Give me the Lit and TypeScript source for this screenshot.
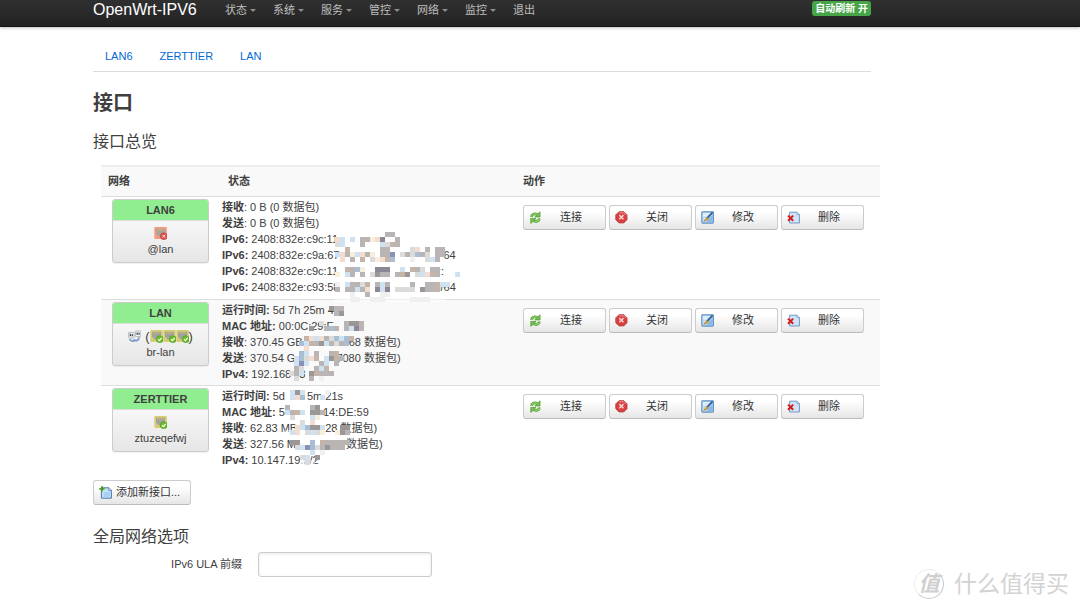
import { LitElement, html, css, svg, nothing } from "lit";
import { customElement, property } from "lit/decorators.js";

type Part = string | number;
interface Line { label: string; parts: Part[]; }
interface Net {
  name: string;
  device: string;
  kind: "off" | "bridge" | "on";
  lines: Line[];
  mosaic: { x: number; y: number; rows: string[] };
}

/* Block colours of the redacted areas */
const TONES: Record<string, string> = {
  g: "#b9b5b5", G: "#9b9797", d: "#8b8794", l: "#dcdbdb", f: "#f0f0f0", w: "#ffffff",
  t: "#c5b5a8", p: "#f3ddd0", b: "#cfe2f1", B: "#a9bdd5", v: "#8992b6", y: "#f7efdc",
};

const NETS: Net[] = [
  {
    name: "LAN6", device: "@lan", kind: "off",
    lines: [
      { label: "接收", parts: [": 0 B (0 数据包)"] },
      { label: "发送", parts: [": 0 B (0 数据包)"] },
      { label: "IPv6:", parts: [" 2408:832e:c9c:11"] },
      { label: "IPv6:", parts: [" 2408:832e:c9a:67", 104, "64"] },
      { label: "IPv6:", parts: [" 2408:832e:c9c:11", 100, "::"] },
      { label: "IPv6:", parts: [" 2408:832e:c93:58", 95, "9/64"] },
    ],
    mosaic: {
      x: 113, y: 33, rows: [
        "..........gg.............",
        "pb.b.ggypd..g............",
        "lb...g...bltg............",
        "..t......gg....lp.g.gg...",
        "bpgybpgywggv.lglBgl.gg...",
        ".p.g.t.lyptB...f..lbg....",
        "wwwww..ww....www...ww....",
        "..tgBy..ddd..b.tgl.gg....",
        "y.bg.g.lGgg.gtG.lbptg...b",
        "wwwww..ww....www...ww....",
        "f.bgglt.gbg....g..ggtbb..",
        "g.ggbgp.dbd.llll.Gggt....",
        "...f..g..ff..............",
        "wwwffwwfffwwwwwffffwww...",
      ],
    },
  },
  {
    name: "LAN", device: "br-lan", kind: "bridge",
    lines: [
      { label: "运行时间:", parts: [" 5d 7h 25m 4"] },
      { label: "MAC 地址:", parts: [" 00:0C:29:E", 12, "?:7"] },
      { label: "接收", parts: [": 370.45 GB", 46, "68 数据包)"] },
      { label: "发送", parts: [": 370.54 G", 41, "7080 数据包)"] },
      { label: "IPv4:", parts: [" 192.168", 8, "3"] },
    ],
    mosaic: {
      x: 67, y: 4, rows: [
        "........Ggg....",
        ".........gG....",
        "...............",
        "......l....gGGg",
        "....G..gBg.gbdg",
        "...............",
        "...tpbpglBbBt..",
        "..BbtgGbglgB...",
        ".w.p.w.w.......",
        ".wBb.g..gt.....",
        ".bBlptwbGtg....",
        ".bvb..gb.g.....",
        ".gl..gbt.......",
        "lgb.Gtggg......",
        ".l..gwf........",
      ],
    },
  },
  {
    name: "ZERTTIER", device: "ztuzeqefwj", kind: "on",
    lines: [
      { label: "运行时间:", parts: [" 5d", 22, "5m 21s"] },
      { label: "MAC 地址:", parts: [" 5", 38, "14:DE:59"] },
      { label: "接收", parts: [": 62.83 MB", 28, "28 数据包)"] },
      { label: "发送", parts: [": 327.56 M", 50, "数据包)"] },
      { label: "IPv4:", parts: [" 10.147.19.5/2"] },
    ],
    mosaic: {
      x: 63, y: 2, rows: [
        ".bGb....f......",
        ".bpB...b.......",
        "...............",
        "g.w..gG........",
        "bgtbwGGg.......",
        ".lw..byw.......",
        "..wl.pw........",
        "..pbBGGb...GG..",
        "wbpwlbly..yGg..",
        "wwwww..www.....",
        ".GG..B.tggggg..",
        "..lbvBlgGggg...",
        "..w..b.f.......",
        "...lb.G........",
        "...wlw.........",
      ],
    },
  },
];

const ACTIONS = [
  { icon: "reload", text: "连接" },
  { icon: "stop", text: "关闭" },
  { icon: "edit", text: "修改" },
  { icon: "remove", text: "删除" },
];

const ICONS: Record<string, unknown> = {
  reload: svg`
    <path d="M2.6 6C2.6 3.2 5.6 2.2 8.2 3.6" fill="none" stroke="#4b9a2c" stroke-width="2.8"/>
    <path d="M2.6 6C2.6 3.2 5.6 2.2 8.2 3.6" fill="none" stroke="#9ad873" stroke-width="1.2"/>
    <path d="M11 .8v5.1H5.9z" fill="#7cc457" stroke="#4b9a2c" stroke-width=".8"/>
    <path d="M10.2 7.4c0 2.8-3 3.8-5.6 2.4" fill="none" stroke="#4b9a2c" stroke-width="2.8"/>
    <path d="M10.2 7.4c0 2.8-3 3.8-5.6 2.4" fill="none" stroke="#9ad873" stroke-width="1.2"/>
    <path d="M1.8 12.4V7.4h5.1z" fill="#7cc457" stroke="#4b9a2c" stroke-width=".8"/>`,
  stop: svg`
    <path d="M4 .7h4.8l3.2 3.2v4.8l-3.2 3.2H4L.8 8.7V3.9z" fill="#d9403f" stroke="#b94142" stroke-width=".9"/>
    <path d="M4.3 1.8h4.2l2.2 2.2" fill="none" stroke="#f29a98" stroke-width=".9"/>
    <path d="M4.3 4.1l4.2 4.2M8.5 4.1L4.3 8.3" stroke="#f7d2d2" stroke-width="1.5"/>`,
  edit: svg`
    <rect x=".8" y=".9" width="11.6" height="11.2" rx=".8" fill="#c2dcf5" stroke="#5c8fc2" stroke-width="1.1"/>
    <path d="M2 2.6h6.4M2 4.6h4.4" stroke="#edf6ff" stroke-width="1.3"/>
    <path d="M11.8 11.6V3.6L4.6 11.6z" fill="#8bb8e4"/>
    <path d="M11.6 1.4L5.8 7.6" stroke="#315f94" stroke-width="1.7"/>
    <path d="M6 6.4L2.8 10.4l4.6-2.4z" fill="#f0b429" stroke="#b77c17" stroke-width=".7"/>`,
  remove: svg`
    <path d="M2.6 1.2h7.6l2.2 2.2v8.6H2.6z" fill="#cfe4f8" stroke="#7398c1" stroke-width="1"/>
    <path d="M10 1.2v2.4h2.4" fill="#fff" stroke="#7398c1" stroke-width=".8"/>
    <path d="M1 4.6l5.2 5.2M6.2 4.6L1 9.8" stroke="#d51c1c" stroke-width="2"/>`,
  add: svg`
    <path d="M2.4 1.8h7.6l2.4 2.4v8H2.4z" fill="#c8e2fa" stroke="#4a78ab" stroke-width="1"/>
    <path d="M4.6 6h6.6v5.2H4.6z" fill="#a9d0f5"/>
    <path d="M9.8 1.8v2.6h2.6" fill="#fff" stroke="#4a78ab" stroke-width=".8"/>
    <path d="M2.9.3v5.2M.3 2.9h5.2" stroke="#4e9a2b" stroke-width="1.9"/>`,
  off: svg`
    <rect x=".3" y="0" width="12.5" height="12" rx="1" fill="#f49a80"/>
    <path d="M2 1.8h9v4.8L8.2 9.6H4.8L2 6.6z" fill="#aaa49b"/>
    <path d="M3.6 1.8v1.8M5.3 1.8v1.8M7 1.8v1.8M8.7 1.8v1.8" stroke="#d9b96b" stroke-width=".8"/>
    <circle cx="9.8" cy="9.2" r="3.4" fill="#df5656" stroke="#bd3b3d" stroke-width=".7"/>
    <path d="M8.5 7.9l2.6 2.6M11.1 7.9l-2.6 2.6" stroke="#f9dcdc" stroke-width="1"/>`,
  on: svg`
    <rect x=".3" y="0" width="12.5" height="12" rx="1" fill="#d6cc74"/>
    <path d="M2 1.8h9v4.8L8.2 9.6H4.8L2 6.6z" fill="#a3a39b"/>
    <path d="M3.6 1.8v1.8M5.3 1.8v1.8M7 1.8v1.8M8.7 1.8v1.8" stroke="#d3c46a" stroke-width=".8"/>
    <circle cx="9.8" cy="9.2" r="3.4" fill="#6fc02c" stroke="#4c9a1c" stroke-width=".7"/>
    <path d="M8 9.3l1.4 1.4 2.3-2.8" fill="none" stroke="#fff" stroke-width="1.1"/>`,
  bridge: svg`
    <rect x=".6" y="2.4" width="5.4" height="5.6" rx=".6" fill="#f4f6f8" stroke="#a3a9b0" stroke-width=".8"/>
    <rect x="7.4" y="1" width="5.4" height="5.6" rx=".6" fill="#f4f6f8" stroke="#a3a9b0" stroke-width=".8"/>
    <path d="M2.4 3.8v2.4M4.3 4.2v2M9.2 2.4v2.4M11.1 2.8v2" stroke="#3f454c" stroke-width="1.3"/>
    <path d="M1.6 9c1.2 3 4.6 2.8 5.2.2M6.2 9.6c1.8 2 4.8.8 4.8-2.4" fill="none" stroke="#7d9bc9" stroke-width="1.8"/>`,
};

@customElement("ui-icon")
class UiIcon extends LitElement {
  @property() name = "";
  static styles = css`
    :host { display: inline-block; width: 13px; height: 13px; flex: none; }
    svg { display: block; width: 100%; height: 100%; }
  `;
  render() {
    return html`<svg viewBox="0 0 13 13" aria-hidden="true">${ICONS[this.name]}</svg>`;
  }
}

@customElement("app-root")
class AppRoot extends LitElement {
  static styles = css`
    * { box-sizing: border-box; }
    :host {
      display: block;
      position: relative;
      min-height: 100vh;
      background: #fff;
      color: #404040;
      font: 11px/16px "Liberation Sans", "Noto Sans CJK SC", sans-serif;
    }
    a { text-decoration: none; }
    .wrap { margin: 0 209px 0 93px; }
    header {
      height: 27px;
      background: linear-gradient(#303030, #222);
      border-bottom: 1px solid #111;
      box-shadow: 0 1px 3px rgba(0, 0, 0, 0.25);
    }
    .bar { display: flex; align-items: flex-start; }
    .brand { width: 132px; font-size: 16px; line-height: 19px; color: #fff; white-space: nowrap; }
    nav { display: flex; gap: 17px; flex: 1; }
    .menu { display: flex; align-items: center; gap: 3px; line-height: 20px; color: #bfbfbf; }
    .caret { border: 3px solid transparent; border-top-color: #8c8c8c; border-bottom: 0; }
    .badge {
      margin: 1px 0 0; padding: 0 3px; border: 0; border-radius: 3px; background: #46a546; color: #fff;
      font: bold 10px/15px "Liberation Sans", "Noto Sans CJK SC", sans-serif;
    }
    .tabs { display: flex; gap: 27px; margin-top: 20px; padding: 1px 12px 7px; line-height: 16px; border-bottom: 1px solid #ddd; }
    .tabs a { color: #0069d6; }
    h2 { margin: 16px 0 0; font-size: 20px; line-height: 30px; }
    h3 { margin: 0; font-size: 16px; line-height: 30px; font-weight: normal; }
    .overview { margin-top: 9px; }
    table { margin: 8px -9px 0 8px; border-collapse: collapse; table-layout: fixed; width: calc(100% + 1px); border-top: 2px solid #eee; }
    .c-net { width: 115px; }
    .c-act { width: 357px; }
    th { height: 30px; padding: 0 7px; text-align: left; background: #f9f9f9; }
    th.state { padding-left: 12px; }
    th.act { padding-left: 0; }
    td { vertical-align: top; padding: 2px 0 3px; border-top: 1px solid #ddd; }
    tr:first-child td { padding-bottom: 4px; }
    tr.alt td { background: #f9f9f9; }
    td.net { padding-left: 11px; padding-right: 7px; }
    td.state { padding-left: 6px; }
    .card { border: 1px solid #ccc; border-radius: 3px; overflow: hidden; text-align: center; background: linear-gradient(#fff, #e6e6e6); box-shadow: 0 1px 1px rgba(0, 0, 0, 0.06); }
    .card-name { background: #90ee90; font-weight: bold; line-height: 20px; }
    .card-body { padding: 6px 0 5px; border-top: 1px solid #ddd; }
    .icons { display: flex; justify-content: center; height: 14px; align-items: center; font-size: 13px; }
    .icons .first { margin-right: 4px; }
    .status { position: relative; }
    .line { height: 16px; white-space: pre; }
    .gap { display: inline-block; }
    .mosaic { position: absolute; }
    .acts { display: flex; gap: 3px; padding-top: 6px; }
    button.btn {
      display: flex; align-items: center; height: 25px; margin: 0; padding: 0 5px; color: #333; cursor: pointer;
      font: 11px/16px "Liberation Sans", "Noto Sans CJK SC", sans-serif;
      border: 1px solid #ccc; border-bottom-color: #bbb; border-radius: 3px; background: linear-gradient(#fff, #fff 25%, #e6e6e6);
    }
    .acts button.btn { width: 83px; }
    .acts .label { flex: 1; text-align: center; }
    button.add { gap: 4px; margin-top: 9px; padding-right: 10px; }
    .global { margin-top: 17px; }
    .field { display: flex; align-items: center; gap: 16px; }
    .field label { width: 149px; text-align: right; }
    .field input { width: 174px; height: 25px; border: 1px solid #ccc; border-radius: 3px; background: #fff; box-shadow: inset 0 1px 3px rgba(0, 0, 0, 0.1); font: inherit; padding: 0 4px; }
    .mark { position: absolute; right: 11px; bottom: 9px; display: flex; align-items: center; gap: 10px; color: #d3d3d3; font-size: 23px; line-height: 34px; }
    .seal { width: 30px; height: 30px; border: 1px solid #eee; border-right-color: #c8c8c8; border-bottom-color: #c8c8c8; border-radius: 50%; text-align: center; font-size: 21px; line-height: 27px; font-weight: bold; font-style: italic; color: #cfcfcf; }
  `;

  private mosaic(m: Net["mosaic"]) {
    const cols = m.rows[0].length;
    return html`<svg class="mosaic" style="left:${m.x}px;top:${m.y}px" width=${cols * 5} height=${m.rows.length * 5}
      shape-rendering="crispEdges" aria-hidden="true">
      ${m.rows.flatMap((row, r) => [...row].map((c, i) =>
        c in TONES ? svg`<rect x=${i * 5} y=${r * 5} width="5" height="5" fill=${TONES[c]} opacity=${c === "w" ? 0.5 : 1}></rect>` : nothing))}
    </svg>`;
  }

  private badges(kind: Net["kind"]) {
    if (kind !== "bridge") return html`<ui-icon name=${kind}></ui-icon>`;
    return html`<ui-icon class="first" name="bridge"></ui-icon>(<ui-icon name="on"></ui-icon><ui-icon name="on"></ui-icon><ui-icon name="on"></ui-icon>)`;
  }

  private row(n: Net, i: number) {
    return html`<tr class=${i % 2 ? "alt" : ""}>
      <td class="net"><div class="card">
        <div class="card-name">${n.name}</div>
        <div class="card-body"><div class="icons">${this.badges(n.kind)}</div><div>${n.device}</div></div>
      </div></td>
      <td class="state"><div class="status">
        ${n.lines.map((l) => html`<div class="line"><b>${l.label}</b>${l.parts.map((p) =>
          typeof p === "number" ? html`<span class="gap" style="width:${p}px"></span>` : p)}</div>`)}
        ${this.mosaic(n.mosaic)}
      </div></td>
      <td><div class="acts">${ACTIONS.map((a) => html`<button class="btn" type="button"><ui-icon name=${a.icon}></ui-icon><span class="label">${a.text}</span></button>`)}</div></td>
    </tr>`;
  }

  render() {
    return html`
      <header><div class="wrap bar">
        <a class="brand" href="#">OpenWrt-IPV6</a>
        <nav>
          ${["状态", "系统", "服务", "管控", "网络", "监控"].map((t) => html`<a class="menu" href="#">${t}<span class="caret"></span></a>`)}
          <a class="menu" href="#">退出</a>
        </nav>
        <button class="badge" type="button">自动刷新 开</button>
      </div></header>
      <main class="wrap">
        <div class="tabs"><a href="#">LAN6</a><a href="#">ZERTTIER</a><a href="#">LAN</a></div>
        <h2>接口</h2>
        <h3 class="overview">接口总览</h3>
        <table>
          <colgroup><col class="c-net"><col><col class="c-act"></colgroup>
          <thead><tr><th>网络</th><th class="state">状态</th><th class="act">动作</th></tr></thead>
          <tbody>${NETS.map((n, i) => this.row(n, i))}</tbody>
        </table>
        <button class="btn add" type="button"><ui-icon name="add"></ui-icon>添加新接口...</button>
        <h3 class="global">全局网络选项</h3>
        <div class="field"><label for="ula">IPv6 ULA 前缀</label><input id="ula" type="text"></div>
      </main>
      <div class="mark"><span class="seal">值</span><span>什么值得买</span></div>
    `;
  }
}
